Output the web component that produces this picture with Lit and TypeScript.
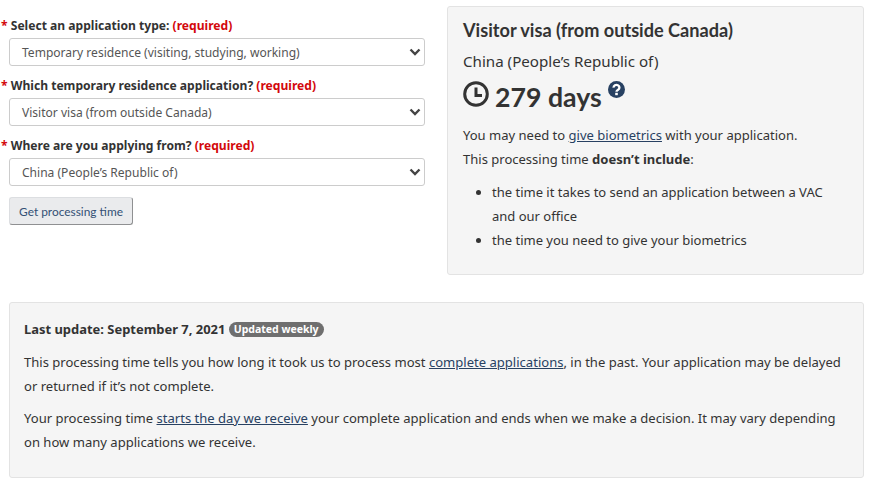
import { LitElement, html, css } from "lit";
import { customElement } from "lit/decorators.js";

const fields = [
  { label: "Select an application type:", value: "Temporary residence (visiting, studying, working)" },
  { label: "Which temporary residence application?", value: "Visitor visa (from outside Canada)" },
  { label: "Where are you applying from?", value: "China (People’s Republic of)" },
];

@customElement("app-root")
export class AppRoot extends LitElement {
  static override styles = css`
    :host {
      display: block;
      width: 871px;
      height: 482px;
      overflow: hidden;
      background: #fff;
      color: #333;
      font-family: "Noto Sans", sans-serif;
      font-size: 13px;
      line-height: 24px;
    }

    .page {
      display: flex;
      flex-direction: column;
      gap: 27px;
      padding: 6px 7px 0 9px;
    }

    .top {
      display: flex;
      align-items: flex-start;
      gap: 22px;
    }

    .form {
      width: 416px;
      flex: none;
    }

    .field {
      height: 60px;
    }

    .label {
      display: block;
      margin-left: -8px;
      height: 26px;
      padding-top: 7px;
      box-sizing: border-box;
      line-height: 26px;
      font-weight: 700;
      font-size: 12.1px;
      white-space: nowrap;
    }

    .star,
    .req {
      color: #d3080c;
    }

    .select {
      display: flex;
      align-items: center;
      justify-content: space-between;
      height: 28px;
      margin-top: 6px;
      padding: 0 3px 0 12px;
      box-sizing: border-box;
      border: 1px solid #ccc;
      border-radius: 3px;
      background: #fff;
      color: #555;
      font-size: 12.05px;
    }

    .select span {
      padding-top: 2px;
    }

    .select svg {
      display: block;
    }

    .button {
      display: block;
      margin-top: 11px;
      width: 124px;
      height: 28px;
      padding: 0;
      border: 1px solid #dcdee1;
      border-right-color: #8f9092;
      border-bottom-color: #8f9092;
      border-radius: 3px;
      background: #eaebed;
      color: #335075;
      font-family: Lato, sans-serif;
      font-size: 11.9px;
    }

    .panel {
      box-sizing: border-box;
      border: 1px solid #e3e3e3;
      border-radius: 3px;
      background: #f5f5f5;
    }

    .result {
      width: 417px;
      height: 269px;
      padding: 9px 15px 0;
    }

    h2 {
      margin: 0;
      font-family: Lato, sans-serif;
      font-size: 18.15px;
      font-weight: 700;
      line-height: 28px;
    }

    .country {
      margin-top: 5px;
      font-size: 15.15px;
      line-height: 24px;
    }

    .days {
      display: flex;
      align-items: flex-start;
      height: 38px;
      margin-top: 5px;
      font-family: Lato, sans-serif;
      font-size: 26.7px;
      font-weight: 700;
      line-height: 38px;
    }

    .clock {
      margin: 3px 6px 0 0;
    }

    .help {
      margin: 3px 0 0 6px;
    }

    p {
      margin: 0;
    }

    .note {
      margin-top: 7px;
      font-size: 13.03px;
    }

    ul {
      margin: 9px 0 0;
      padding-left: 29px;
      font-size: 13px;
    }

    a {
      color: #284162;
      text-decoration: underline;
    }

    .info {
      height: 176px;
      padding: 14px 14px 0;
      font-size: 13.05px;
    }

    .info p + p {
      margin-top: 8px;
    }

    .info .updated {
      margin-bottom: 9px;
      font-size: 12.95px;
      font-weight: 700;
    }

    .badge {
      display: inline-block;
      height: 15px;
      padding: 0 5px;
      border-radius: 8px;
      background: #6f6f6f;
      color: #fff;
      font-size: 10.5px;
      line-height: 15px;
      vertical-align: 1px;
    }
  `;

  private renderField(field: { label: string; value: string }) {
    return html`
      <div class="field">
        <span class="label">
          <span class="star">*</span> ${field.label}
          <span class="req">(required)</span>
        </span>
        <div class="select">
          <span>${field.value}</span>
          <svg width="12" height="8" viewBox="0 0 12 8" fill="none" stroke="#444" stroke-width="2.4">
            <path d="M1.5 1.5 6 6l4.5-4.5" />
          </svg>
        </div>
      </div>
    `;
  }

  override render() {
    return html`
      <div class="page">
        <div class="top">
          <div class="form">
            ${fields.map((f) => this.renderField(f))}
            <button class="button">Get processing time</button>
          </div>
          <section class="panel result">
            <h2>Visitor visa (from outside Canada)</h2>
            <div class="country">China (People’s Republic of)</div>
            <div class="days">
              <svg class="clock" width="26" height="26" viewBox="0 0 26 26" fill="none" stroke="#333" stroke-width="3">
                <circle cx="13" cy="13" r="11.3" />
                <path d="M13 6.5V14.5h6" />
              </svg>
              <span>279 days</span>
              <svg class="help" width="17" height="17" viewBox="0 0 17 17">
                <circle cx="8.5" cy="8.5" r="8.5" fill="#284162" />
                <path d="M5.6 6.6a2.9 2.6 0 1 1 4.5 2.1c-1 .6-1.6 1-1.6 2.1" fill="none" stroke="#fff" stroke-width="2.4" />
                <rect x="7.2" y="11.8" width="2.6" height="2.4" fill="#fff" />
              </svg>
            </div>
            <div class="note">
              <p>You may need to <a href="#">give biometrics</a> with your application.</p>
              <p>This processing time <strong>doesn’t include</strong>:</p>
            </div>
            <ul>
              <li>the time it takes to send an application between a VAC and our office</li>
              <li>the time you need to give your biometrics</li>
            </ul>
          </section>
        </div>
        <section class="panel info">
          <p class="updated">Last update: September 7, 2021 <span class="badge">Updated weekly</span></p>
          <p>
            This processing time tells you how long it took us to process most
            <a href="#">complete applications</a>, in the past. Your application may be delayed or
            returned if it’s not complete.
          </p>
          <p>
            Your processing time <a href="#">starts the day we receive</a> your complete application
            and ends when we make a decision. It may vary depending on how many applications we
            receive.
          </p>
        </section>
      </div>
    `;
  }
}

declare global {
  interface HTMLElementTagNameMap {
    "app-root": AppRoot;
  }
}
